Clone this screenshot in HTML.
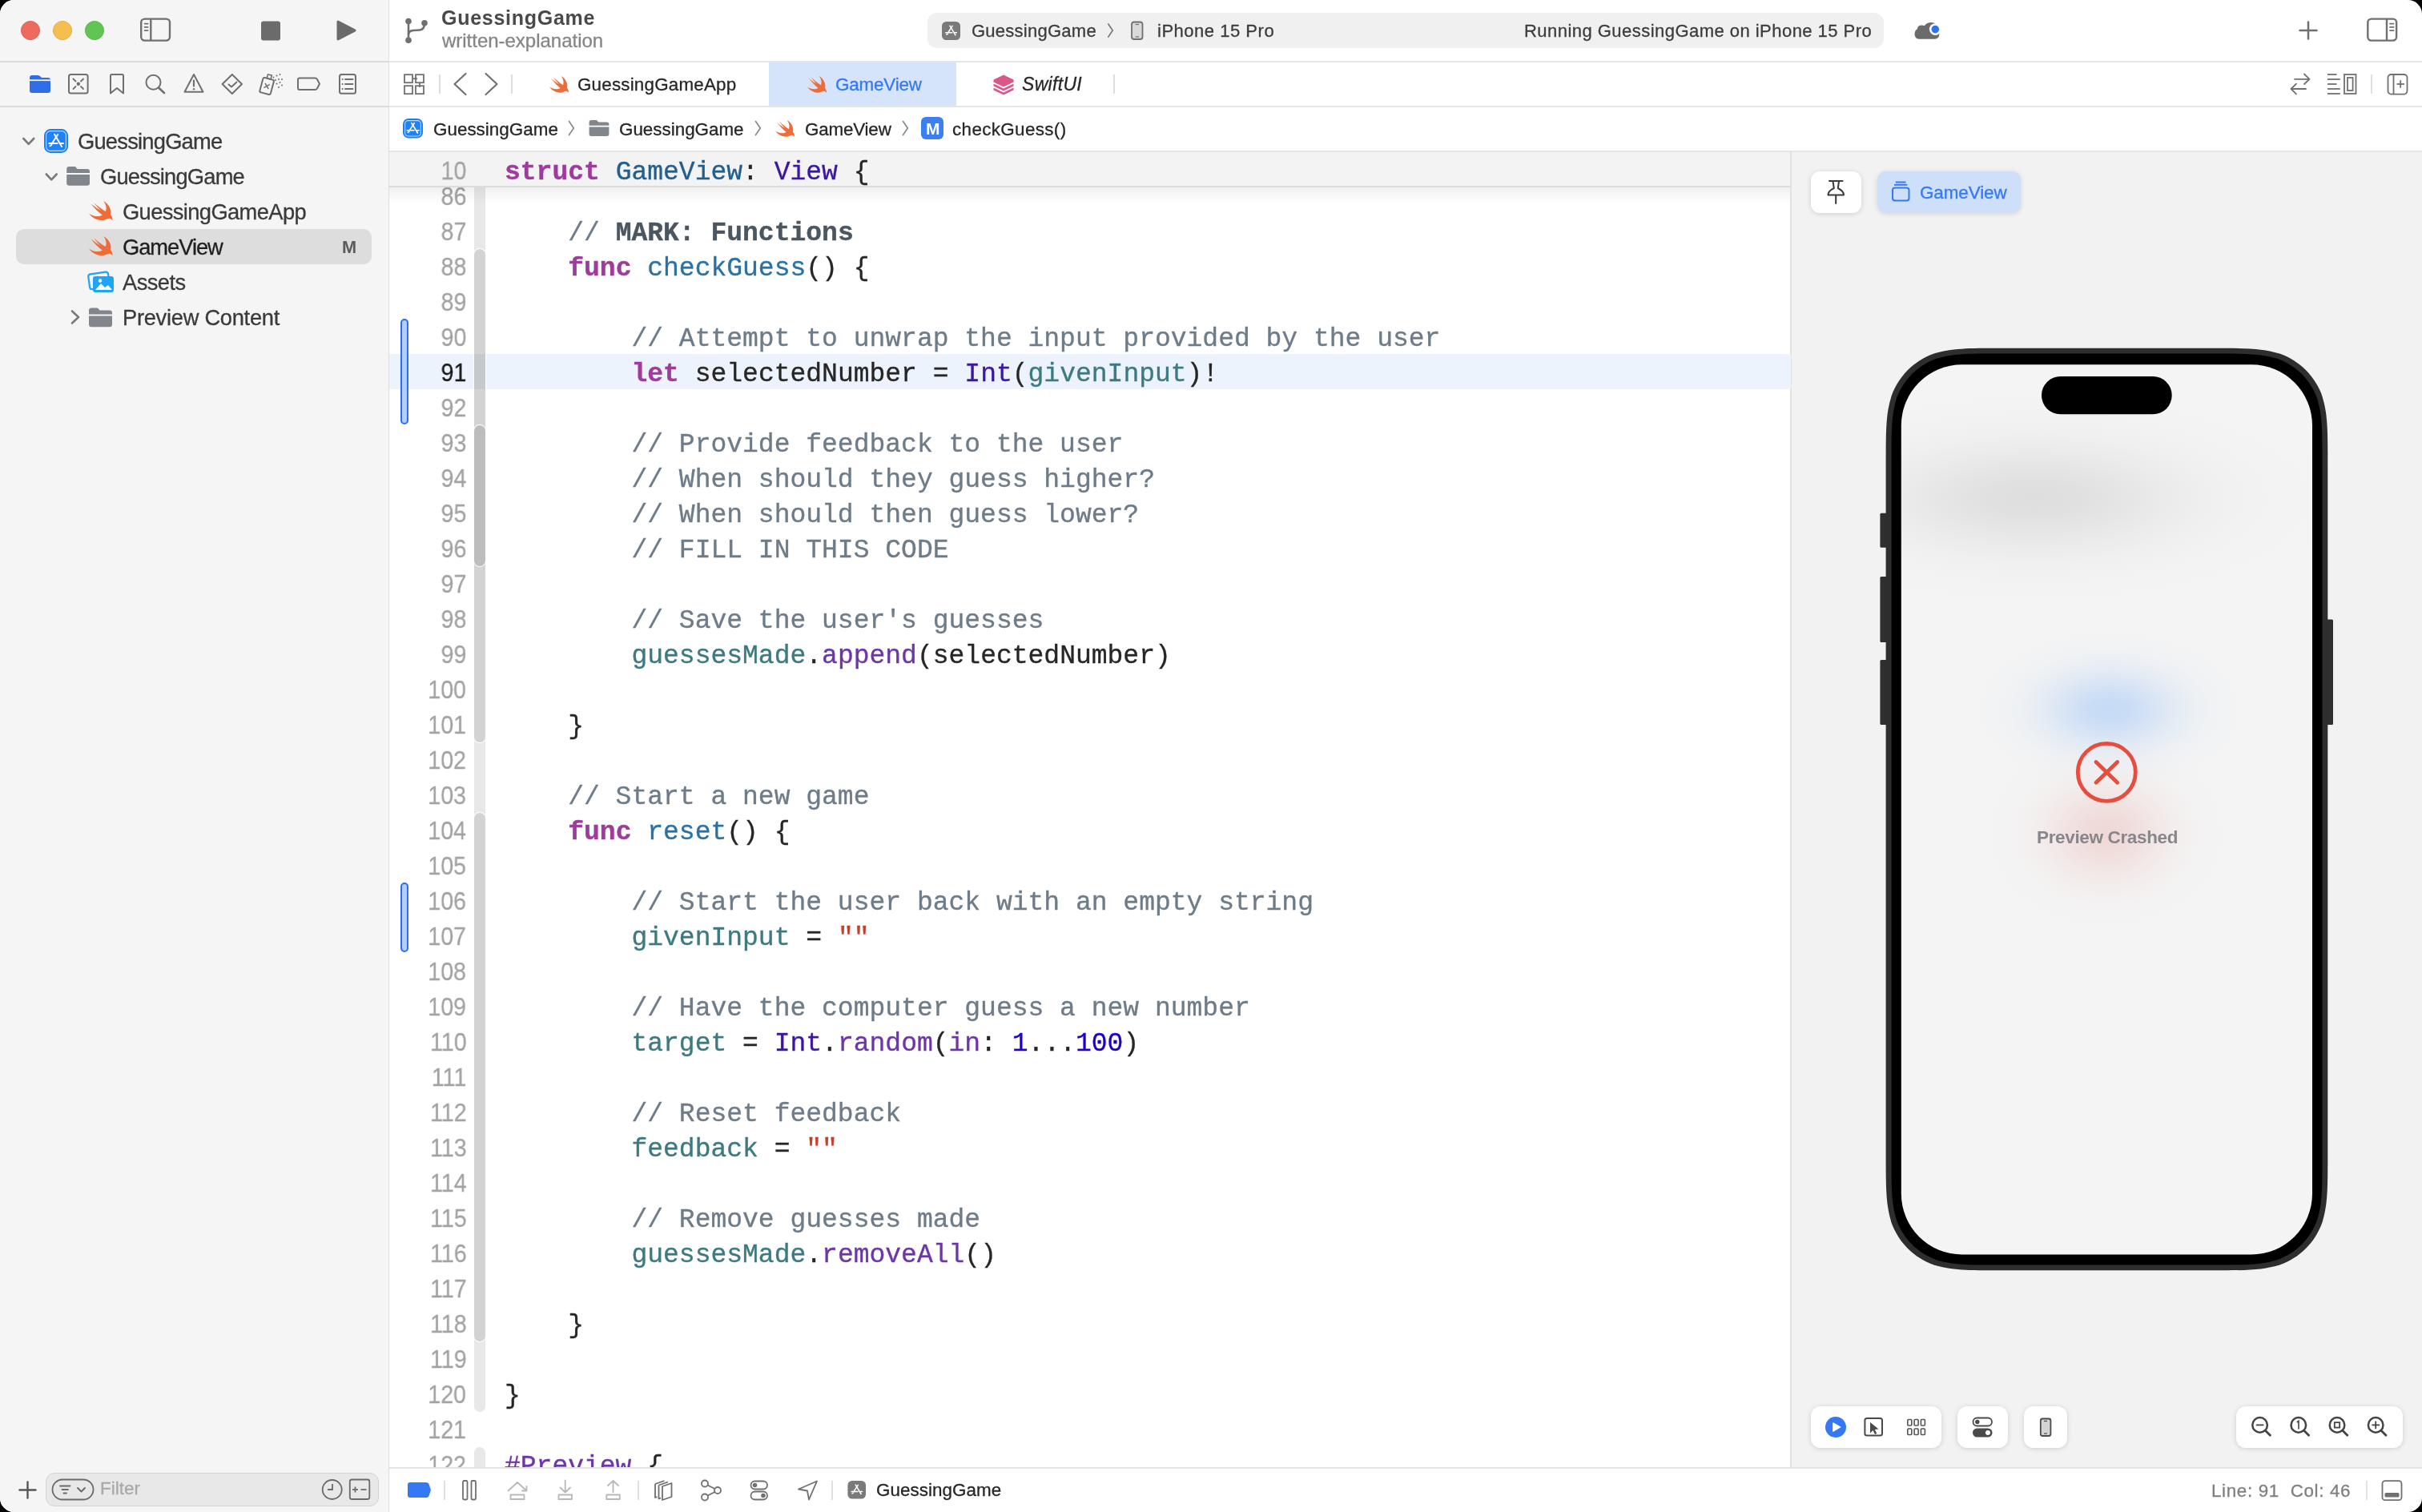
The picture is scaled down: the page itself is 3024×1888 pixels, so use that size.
<!DOCTYPE html><html><head><meta charset="utf-8"><style>
*{margin:0;padding:0;box-sizing:border-box}
html,body{width:3024px;height:1888px;overflow:hidden;background:#000}
body{font-family:'Liberation Sans', sans-serif;position:relative}
#win{position:absolute;left:0;top:0;width:3024px;height:1888px;border-radius:17.5px;overflow:hidden;background:#fff}
.a{position:absolute}
.t{position:absolute;white-space:pre;line-height:1;will-change:transform}
</style></head><body><div id="win"><div class="a" style="left:0px;top:0px;width:485px;height:1888px;background:#f5f5f5;"></div><div class="a" style="left:485px;top:0px;width:1px;height:1888px;background:#dedede;"></div><div class="a" style="left:0px;top:76px;width:485px;height:2px;background:#dbdbdb;"></div><div class="a" style="left:486px;top:76px;width:2538px;height:2px;background:#e5e5e5;"></div><div class="a" style="left:0px;top:132px;width:485px;height:2px;background:#dbdbdb;"></div><div class="a" style="left:486px;top:132px;width:2538px;height:2px;background:#e5e5e5;"></div><div class="a" style="left:486px;top:188px;width:2538px;height:2px;background:#e5e5e5;"></div><div class="a" style="left:2237px;top:190px;width:787px;height:1642px;background:#f2f2f2;"></div><div class="a" style="left:2235px;top:190px;width:2px;height:1642px;background:#e2e2e2;"></div><div class="a" style="left:486px;top:1832px;width:2538px;height:2px;background:#e3e3e3;"></div><div class="a" style="left:1158px;top:16px;width:1194px;height:44px;background:#f0f0f0;border-radius:12px"></div><div class="a" style="left:20px;top:286px;width:444px;height:43.5px;background:#dddddd;border-radius:10px"></div><div class="a" style="left:57px;top:1839px;width:416px;height:42px;background:#e8e8e8;border-radius:11px;border:1px solid #d3d3d3"></div><div class="a" style="left:548px;top:93px;width:2px;height:24px;background:#dedede;"></div><div class="a" style="left:638px;top:93px;width:2px;height:24px;background:#dedede;"></div><div class="a" style="left:960px;top:78px;width:234px;height:54px;background:#d5e4fa;"></div><div class="a" style="left:1390px;top:93px;width:2px;height:24px;background:#dedede;"></div><div class="a" style="left:2960px;top:93px;width:2px;height:24px;background:#e0e0e0;"></div><div class="a" style="left:1150px;top:146px;width:28px;height:28px;background:#3b7ff0;border-radius:6px"></div><div class="a" style="left:486px;top:442px;width:1750px;height:44px;background:#edf3fd;"></div><div class="a" style="left:592px;top:233px;width:14px;height:1530px;background:#e8e8e8;border-radius:0 0 7px 7px"></div><div class="a" style="left:592px;top:1807px;width:14px;height:25px;background:#e8e8e8;border-radius:7px 7px 0 0"></div><div class="a" style="left:592px;top:311px;width:14px;height:616px;background:#d3d3d3;border-radius:7px;box-shadow:0 0 0 1.2px rgba(255,255,255,0.85)"></div><div class="a" style="left:592px;top:1015px;width:14px;height:660px;background:#d3d3d3;border-radius:7px;box-shadow:0 0 0 1.2px rgba(255,255,255,0.85)"></div><div class="a" style="left:592px;top:531px;width:14px;height:176px;background:#bdbdbd;border-radius:7px;box-shadow:0 0 0 1.2px rgba(255,255,255,0.85)"></div><div class="a" style="left:592px;top:442px;width:14px;height:44px;background:rgba(40,80,140,0.08);"></div><div class="a" style="left:500px;top:398px;width:10px;height:132px;background:#b4cefb;border:2px solid #2d6cf5;border-radius:5px"></div><div class="a" style="left:500px;top:1102px;width:10px;height:87px;background:#b4cefb;border:2px solid #2d6cf5;border-radius:5px"></div><div class="a" style="left:0;top:0;width:3024px;height:1888px;clip-path:inset(190px 788px 56px 486px)"><div class="t" style="right:2441.5px;top:229.88px;font-size:31.8px;color:#a3a3a3;font-weight:400;font-family:'Liberation Sans', sans-serif;-webkit-text-stroke:0.3px currentColor;transform:scaleX(0.9);transform-origin:100% 50%">86</div><div class="t" style="left:630px;top:274.72px;font-size:33px;font-family:'Liberation Mono', monospace;-webkit-text-stroke:0.35px currentColor"><span style="color:#262626;">    </span><span style="color:#6e7b88;">// </span><span style="color:#4b5661;font-weight:700;">MARK: Functions</span></div><div class="t" style="right:2441.5px;top:273.88px;font-size:31.8px;color:#a3a3a3;font-weight:400;font-family:'Liberation Sans', sans-serif;-webkit-text-stroke:0.3px currentColor;transform:scaleX(0.9);transform-origin:100% 50%">87</div><div class="t" style="left:630px;top:318.72px;font-size:33px;font-family:'Liberation Mono', monospace;-webkit-text-stroke:0.35px currentColor"><span style="color:#262626;">    </span><span style="color:#9f3a9e;font-weight:700;">func</span><span style="color:#262626;"> </span><span style="color:#2a71a4;">checkGuess</span><span style="color:#262626;">() {</span></div><div class="t" style="right:2441.5px;top:317.88px;font-size:31.8px;color:#a3a3a3;font-weight:400;font-family:'Liberation Sans', sans-serif;-webkit-text-stroke:0.3px currentColor;transform:scaleX(0.9);transform-origin:100% 50%">88</div><div class="t" style="right:2441.5px;top:361.88px;font-size:31.8px;color:#a3a3a3;font-weight:400;font-family:'Liberation Sans', sans-serif;-webkit-text-stroke:0.3px currentColor;transform:scaleX(0.9);transform-origin:100% 50%">89</div><div class="t" style="left:630px;top:406.72px;font-size:33px;font-family:'Liberation Mono', monospace;-webkit-text-stroke:0.35px currentColor"><span style="color:#6e7b88;">        // Attempt to unwrap the input provided by the user</span></div><div class="t" style="right:2441.5px;top:405.88px;font-size:31.8px;color:#a3a3a3;font-weight:400;font-family:'Liberation Sans', sans-serif;-webkit-text-stroke:0.3px currentColor;transform:scaleX(0.9);transform-origin:100% 50%">90</div><div class="t" style="left:630px;top:450.72px;font-size:33px;font-family:'Liberation Mono', monospace;-webkit-text-stroke:0.35px currentColor"><span style="color:#262626;">        </span><span style="color:#9f3a9e;font-weight:700;">let</span><span style="color:#262626;"> selectedNumber = </span><span style="color:#3b16a2;">Int</span><span style="color:#262626;">(</span><span style="color:#3d7a80;">givenInput</span><span style="color:#262626;">)!</span></div><div class="t" style="right:2441.5px;top:449.88px;font-size:31.8px;color:#1a1a1a;font-weight:400;font-family:'Liberation Sans', sans-serif;-webkit-text-stroke:0.3px currentColor;transform:scaleX(0.9);transform-origin:100% 50%">91</div><div class="t" style="right:2441.5px;top:493.88px;font-size:31.8px;color:#a3a3a3;font-weight:400;font-family:'Liberation Sans', sans-serif;-webkit-text-stroke:0.3px currentColor;transform:scaleX(0.9);transform-origin:100% 50%">92</div><div class="t" style="left:630px;top:538.72px;font-size:33px;font-family:'Liberation Mono', monospace;-webkit-text-stroke:0.35px currentColor"><span style="color:#6e7b88;">        // Provide feedback to the user</span></div><div class="t" style="right:2441.5px;top:537.88px;font-size:31.8px;color:#a3a3a3;font-weight:400;font-family:'Liberation Sans', sans-serif;-webkit-text-stroke:0.3px currentColor;transform:scaleX(0.9);transform-origin:100% 50%">93</div><div class="t" style="left:630px;top:582.72px;font-size:33px;font-family:'Liberation Mono', monospace;-webkit-text-stroke:0.35px currentColor"><span style="color:#6e7b88;">        // When should they guess higher?</span></div><div class="t" style="right:2441.5px;top:581.88px;font-size:31.8px;color:#a3a3a3;font-weight:400;font-family:'Liberation Sans', sans-serif;-webkit-text-stroke:0.3px currentColor;transform:scaleX(0.9);transform-origin:100% 50%">94</div><div class="t" style="left:630px;top:626.72px;font-size:33px;font-family:'Liberation Mono', monospace;-webkit-text-stroke:0.35px currentColor"><span style="color:#6e7b88;">        // When should then guess lower?</span></div><div class="t" style="right:2441.5px;top:625.88px;font-size:31.8px;color:#a3a3a3;font-weight:400;font-family:'Liberation Sans', sans-serif;-webkit-text-stroke:0.3px currentColor;transform:scaleX(0.9);transform-origin:100% 50%">95</div><div class="t" style="left:630px;top:670.72px;font-size:33px;font-family:'Liberation Mono', monospace;-webkit-text-stroke:0.35px currentColor"><span style="color:#6e7b88;">        // FILL IN THIS CODE</span></div><div class="t" style="right:2441.5px;top:669.88px;font-size:31.8px;color:#a3a3a3;font-weight:400;font-family:'Liberation Sans', sans-serif;-webkit-text-stroke:0.3px currentColor;transform:scaleX(0.9);transform-origin:100% 50%">96</div><div class="t" style="right:2441.5px;top:713.88px;font-size:31.8px;color:#a3a3a3;font-weight:400;font-family:'Liberation Sans', sans-serif;-webkit-text-stroke:0.3px currentColor;transform:scaleX(0.9);transform-origin:100% 50%">97</div><div class="t" style="left:630px;top:758.72px;font-size:33px;font-family:'Liberation Mono', monospace;-webkit-text-stroke:0.35px currentColor"><span style="color:#6e7b88;">        // Save the user's guesses</span></div><div class="t" style="right:2441.5px;top:757.88px;font-size:31.8px;color:#a3a3a3;font-weight:400;font-family:'Liberation Sans', sans-serif;-webkit-text-stroke:0.3px currentColor;transform:scaleX(0.9);transform-origin:100% 50%">98</div><div class="t" style="left:630px;top:802.72px;font-size:33px;font-family:'Liberation Mono', monospace;-webkit-text-stroke:0.35px currentColor"><span style="color:#262626;">        </span><span style="color:#3d7a80;">guessesMade</span><span style="color:#262626;">.</span><span style="color:#6c36a9;">append</span><span style="color:#262626;">(selectedNumber)</span></div><div class="t" style="right:2441.5px;top:801.88px;font-size:31.8px;color:#a3a3a3;font-weight:400;font-family:'Liberation Sans', sans-serif;-webkit-text-stroke:0.3px currentColor;transform:scaleX(0.9);transform-origin:100% 50%">99</div><div class="t" style="right:2441.5px;top:845.88px;font-size:31.8px;color:#a3a3a3;font-weight:400;font-family:'Liberation Sans', sans-serif;-webkit-text-stroke:0.3px currentColor;transform:scaleX(0.9);transform-origin:100% 50%">100</div><div class="t" style="left:630px;top:890.72px;font-size:33px;font-family:'Liberation Mono', monospace;-webkit-text-stroke:0.35px currentColor"><span style="color:#262626;">    }</span></div><div class="t" style="right:2441.5px;top:889.88px;font-size:31.8px;color:#a3a3a3;font-weight:400;font-family:'Liberation Sans', sans-serif;-webkit-text-stroke:0.3px currentColor;transform:scaleX(0.9);transform-origin:100% 50%">101</div><div class="t" style="right:2441.5px;top:933.88px;font-size:31.8px;color:#a3a3a3;font-weight:400;font-family:'Liberation Sans', sans-serif;-webkit-text-stroke:0.3px currentColor;transform:scaleX(0.9);transform-origin:100% 50%">102</div><div class="t" style="left:630px;top:978.72px;font-size:33px;font-family:'Liberation Mono', monospace;-webkit-text-stroke:0.35px currentColor"><span style="color:#6e7b88;">    // Start a new game</span></div><div class="t" style="right:2441.5px;top:977.88px;font-size:31.8px;color:#a3a3a3;font-weight:400;font-family:'Liberation Sans', sans-serif;-webkit-text-stroke:0.3px currentColor;transform:scaleX(0.9);transform-origin:100% 50%">103</div><div class="t" style="left:630px;top:1022.72px;font-size:33px;font-family:'Liberation Mono', monospace;-webkit-text-stroke:0.35px currentColor"><span style="color:#262626;">    </span><span style="color:#9f3a9e;font-weight:700;">func</span><span style="color:#262626;"> </span><span style="color:#2a71a4;">reset</span><span style="color:#262626;">() {</span></div><div class="t" style="right:2441.5px;top:1021.88px;font-size:31.8px;color:#a3a3a3;font-weight:400;font-family:'Liberation Sans', sans-serif;-webkit-text-stroke:0.3px currentColor;transform:scaleX(0.9);transform-origin:100% 50%">104</div><div class="t" style="right:2441.5px;top:1065.88px;font-size:31.8px;color:#a3a3a3;font-weight:400;font-family:'Liberation Sans', sans-serif;-webkit-text-stroke:0.3px currentColor;transform:scaleX(0.9);transform-origin:100% 50%">105</div><div class="t" style="left:630px;top:1110.72px;font-size:33px;font-family:'Liberation Mono', monospace;-webkit-text-stroke:0.35px currentColor"><span style="color:#6e7b88;">        // Start the user back with an empty string</span></div><div class="t" style="right:2441.5px;top:1109.88px;font-size:31.8px;color:#a3a3a3;font-weight:400;font-family:'Liberation Sans', sans-serif;-webkit-text-stroke:0.3px currentColor;transform:scaleX(0.9);transform-origin:100% 50%">106</div><div class="t" style="left:630px;top:1154.72px;font-size:33px;font-family:'Liberation Mono', monospace;-webkit-text-stroke:0.35px currentColor"><span style="color:#262626;">        </span><span style="color:#3d7a80;">givenInput</span><span style="color:#262626;"> = </span><span style="color:#c2412d;">""</span></div><div class="t" style="right:2441.5px;top:1153.88px;font-size:31.8px;color:#a3a3a3;font-weight:400;font-family:'Liberation Sans', sans-serif;-webkit-text-stroke:0.3px currentColor;transform:scaleX(0.9);transform-origin:100% 50%">107</div><div class="t" style="right:2441.5px;top:1197.88px;font-size:31.8px;color:#a3a3a3;font-weight:400;font-family:'Liberation Sans', sans-serif;-webkit-text-stroke:0.3px currentColor;transform:scaleX(0.9);transform-origin:100% 50%">108</div><div class="t" style="left:630px;top:1242.72px;font-size:33px;font-family:'Liberation Mono', monospace;-webkit-text-stroke:0.35px currentColor"><span style="color:#6e7b88;">        // Have the computer guess a new number</span></div><div class="t" style="right:2441.5px;top:1241.88px;font-size:31.8px;color:#a3a3a3;font-weight:400;font-family:'Liberation Sans', sans-serif;-webkit-text-stroke:0.3px currentColor;transform:scaleX(0.9);transform-origin:100% 50%">109</div><div class="t" style="left:630px;top:1286.72px;font-size:33px;font-family:'Liberation Mono', monospace;-webkit-text-stroke:0.35px currentColor"><span style="color:#262626;">        </span><span style="color:#3d7a80;">target</span><span style="color:#262626;"> = </span><span style="color:#3b16a2;">Int</span><span style="color:#262626;">.</span><span style="color:#6c36a9;">random</span><span style="color:#262626;">(</span><span style="color:#6c36a9;">in</span><span style="color:#262626;">: </span><span style="color:#1c00cf;">1</span><span style="color:#262626;">...</span><span style="color:#1c00cf;">100</span><span style="color:#262626;">)</span></div><div class="t" style="right:2441.5px;top:1285.88px;font-size:31.8px;color:#a3a3a3;font-weight:400;font-family:'Liberation Sans', sans-serif;-webkit-text-stroke:0.3px currentColor;transform:scaleX(0.9);transform-origin:100% 50%">110</div><div class="t" style="right:2441.5px;top:1329.88px;font-size:31.8px;color:#a3a3a3;font-weight:400;font-family:'Liberation Sans', sans-serif;-webkit-text-stroke:0.3px currentColor;transform:scaleX(0.9);transform-origin:100% 50%">111</div><div class="t" style="left:630px;top:1374.72px;font-size:33px;font-family:'Liberation Mono', monospace;-webkit-text-stroke:0.35px currentColor"><span style="color:#6e7b88;">        // Reset feedback</span></div><div class="t" style="right:2441.5px;top:1373.88px;font-size:31.8px;color:#a3a3a3;font-weight:400;font-family:'Liberation Sans', sans-serif;-webkit-text-stroke:0.3px currentColor;transform:scaleX(0.9);transform-origin:100% 50%">112</div><div class="t" style="left:630px;top:1418.72px;font-size:33px;font-family:'Liberation Mono', monospace;-webkit-text-stroke:0.35px currentColor"><span style="color:#262626;">        </span><span style="color:#3d7a80;">feedback</span><span style="color:#262626;"> = </span><span style="color:#c2412d;">""</span></div><div class="t" style="right:2441.5px;top:1417.88px;font-size:31.8px;color:#a3a3a3;font-weight:400;font-family:'Liberation Sans', sans-serif;-webkit-text-stroke:0.3px currentColor;transform:scaleX(0.9);transform-origin:100% 50%">113</div><div class="t" style="right:2441.5px;top:1461.88px;font-size:31.8px;color:#a3a3a3;font-weight:400;font-family:'Liberation Sans', sans-serif;-webkit-text-stroke:0.3px currentColor;transform:scaleX(0.9);transform-origin:100% 50%">114</div><div class="t" style="left:630px;top:1506.72px;font-size:33px;font-family:'Liberation Mono', monospace;-webkit-text-stroke:0.35px currentColor"><span style="color:#6e7b88;">        // Remove guesses made</span></div><div class="t" style="right:2441.5px;top:1505.88px;font-size:31.8px;color:#a3a3a3;font-weight:400;font-family:'Liberation Sans', sans-serif;-webkit-text-stroke:0.3px currentColor;transform:scaleX(0.9);transform-origin:100% 50%">115</div><div class="t" style="left:630px;top:1550.72px;font-size:33px;font-family:'Liberation Mono', monospace;-webkit-text-stroke:0.35px currentColor"><span style="color:#262626;">        </span><span style="color:#3d7a80;">guessesMade</span><span style="color:#262626;">.</span><span style="color:#6c36a9;">removeAll</span><span style="color:#262626;">()</span></div><div class="t" style="right:2441.5px;top:1549.88px;font-size:31.8px;color:#a3a3a3;font-weight:400;font-family:'Liberation Sans', sans-serif;-webkit-text-stroke:0.3px currentColor;transform:scaleX(0.9);transform-origin:100% 50%">116</div><div class="t" style="right:2441.5px;top:1593.88px;font-size:31.8px;color:#a3a3a3;font-weight:400;font-family:'Liberation Sans', sans-serif;-webkit-text-stroke:0.3px currentColor;transform:scaleX(0.9);transform-origin:100% 50%">117</div><div class="t" style="left:630px;top:1638.72px;font-size:33px;font-family:'Liberation Mono', monospace;-webkit-text-stroke:0.35px currentColor"><span style="color:#262626;">    }</span></div><div class="t" style="right:2441.5px;top:1637.88px;font-size:31.8px;color:#a3a3a3;font-weight:400;font-family:'Liberation Sans', sans-serif;-webkit-text-stroke:0.3px currentColor;transform:scaleX(0.9);transform-origin:100% 50%">118</div><div class="t" style="right:2441.5px;top:1681.88px;font-size:31.8px;color:#a3a3a3;font-weight:400;font-family:'Liberation Sans', sans-serif;-webkit-text-stroke:0.3px currentColor;transform:scaleX(0.9);transform-origin:100% 50%">119</div><div class="t" style="left:630px;top:1726.72px;font-size:33px;font-family:'Liberation Mono', monospace;-webkit-text-stroke:0.35px currentColor"><span style="color:#262626;">}</span></div><div class="t" style="right:2441.5px;top:1725.88px;font-size:31.8px;color:#a3a3a3;font-weight:400;font-family:'Liberation Sans', sans-serif;-webkit-text-stroke:0.3px currentColor;transform:scaleX(0.9);transform-origin:100% 50%">120</div><div class="t" style="right:2441.5px;top:1769.88px;font-size:31.8px;color:#a3a3a3;font-weight:400;font-family:'Liberation Sans', sans-serif;-webkit-text-stroke:0.3px currentColor;transform:scaleX(0.9);transform-origin:100% 50%">121</div><div class="t" style="left:630px;top:1814.72px;font-size:33px;font-family:'Liberation Mono', monospace;-webkit-text-stroke:0.35px currentColor"><span style="color:#6c36a9;">#Preview</span><span style="color:#262626;"> {</span></div><div class="t" style="right:2441.5px;top:1813.88px;font-size:31.8px;color:#a3a3a3;font-weight:400;font-family:'Liberation Sans', sans-serif;-webkit-text-stroke:0.3px currentColor;transform:scaleX(0.9);transform-origin:100% 50%">122</div></div><div class="a" style="left:486px;top:190px;width:1749px;height:42px;background:#f3f3f3;"></div><div class="a" style="left:486px;top:232px;width:1749px;height:2px;background:#dcdcdc;"></div><div class="a" style="left:486px;top:234px;width:1749px;height:20px;background:linear-gradient(rgba(0,0,0,0.06),rgba(0,0,0,0))"></div><div class="t" style="left:630px;top:198.72px;font-size:33px;font-family:'Liberation Mono', monospace;-webkit-text-stroke:0.35px currentColor"><span style="color:#9f3a9e;font-weight:700;">struct</span><span style="color:#262626;"> </span><span style="color:#215f8c;">GameView</span><span style="color:#262626;">: </span><span style="color:#3b16a2;">View</span><span style="color:#262626;"> {</span></div><div class="t" style="right:2441.5px;top:197.88px;font-size:31.8px;color:#a3a3a3;font-weight:400;font-family:'Liberation Sans', sans-serif;-webkit-text-stroke:0.3px currentColor;transform:scaleX(0.9);transform-origin:100% 50%">10</div><div class="a" style="left:2261px;top:214px;width:63px;height:52px;background:#ffffff;border-radius:11px;box-shadow:0 1px 6px rgba(0,0,0,0.15)"></div><div class="a" style="left:2344px;top:214px;width:179px;height:52px;background:#cddff9;border-radius:11px;box-shadow:0 1px 6px rgba(0,0,0,0.13)"></div><div class="a" style="left:2261px;top:1756px;width:163px;height:52px;background:#fff;border-radius:12px;box-shadow:0 1px 6px rgba(0,0,0,0.15)"></div><div class="a" style="left:2444px;top:1756px;width:63px;height:52px;background:#fff;border-radius:12px;box-shadow:0 1px 6px rgba(0,0,0,0.15)"></div><div class="a" style="left:2527px;top:1756px;width:54px;height:52px;background:#fff;border-radius:12px;box-shadow:0 1px 6px rgba(0,0,0,0.15)"></div><div class="a" style="left:2792px;top:1756px;width:208px;height:52px;background:#fff;border-radius:12px;box-shadow:0 1px 6px rgba(0,0,0,0.15)"></div><div class="a" style="left:554px;top:1849px;width:2px;height:24px;background:#e0e0e0;"></div><div class="a" style="left:796px;top:1849px;width:2px;height:24px;background:#e0e0e0;"></div><div class="a" style="left:1038px;top:1849px;width:2px;height:24px;background:#e0e0e0;"></div><div class="a" style="left:2954px;top:1849px;width:2px;height:24px;background:#e3e3e3;"></div><svg class="a" style="left:0;top:0" width="3024" height="1888" viewBox="0 0 3024 1888"><defs><linearGradient id="swg" x1="0" y1="0" x2="0" y2="1"><stop offset="0" stop-color="#f4905c"/><stop offset="1" stop-color="#ec6a3e"/></linearGradient><filter id="blur40" filterUnits="userSpaceOnUse" x="2200" y="300" width="800" height="1400"><feGaussianBlur stdDeviation="40"/></filter><filter id="blur25" filterUnits="userSpaceOnUse" x="2200" y="300" width="800" height="1400"><feGaussianBlur stdDeviation="25"/></filter><filter id="sh" x="-0.5" y="-0.5" width="2" height="2"><feDropShadow dx="0" dy="1" stdDeviation="1.5" flood-color="#000" flood-opacity="0.18"/></filter></defs><circle cx="38" cy="38" r="11.6" fill="#ee6a5f" stroke="#d9574c" stroke-width="0.8"/><circle cx="78" cy="38" r="11.6" fill="#f5bf4f" stroke="#dba540" stroke-width="0.8"/><circle cx="118" cy="38" r="11.6" fill="#61c554" stroke="#4fae43" stroke-width="0.8"/><rect x="176.2" y="23.6" width="35.8" height="27" rx="4.5" fill="none" stroke="#707070" stroke-width="2.4"/><line x1="188.3" y1="23.6" x2="188.3" y2="50.6" stroke="#707070" stroke-width="2.4"/><g stroke="#707070" stroke-width="1.8" stroke-linecap="round"><line x1="180.6" y1="29.6" x2="184.6" y2="29.6"/><line x1="180.6" y1="33.9" x2="184.6" y2="33.9"/><line x1="180.6" y1="38.1" x2="184.6" y2="38.1"/></g><rect x="326" y="26.5" width="24" height="24" rx="3" fill="#6b6b6b"/><path d="M420.5 27.5 Q420.5 24.5 423.2 25.9 L443.5 36.6 Q445.8 38 443.5 39.4 L423.2 50.1 Q420.5 51.5 420.5 48.5 Z" fill="#6b6b6b"/><g stroke="#707070" stroke-width="2.6" fill="none" stroke-linecap="round"><path d="M510 27 L510 50"/><path d="M510 43 Q510 38.5 516 38 L524 37.5 Q530 37 530 29"/></g><g fill="#707070"><circle cx="510" cy="26.5" r="3.8"/><circle cx="510" cy="50.3" r="3.8"/><circle cx="530" cy="28.8" r="3.8"/></g><rect x="1176" y="27" width="23" height="23" rx="5.52" fill="#7a7a7a"/><g stroke="#fff" stroke-width="1.50" stroke-linecap="round" fill="none"><path d="M1185.96 32.22 L1192.95 43.86"/><path d="M1189.11 32.41 L1184.05 40.23"/><path d="M1181.75 43.22 L1183.24 42.30"/><path d="M1180.76 40.80 L1188.81 40.80"/><path d="M1191.64 40.80 L1194.40 40.80"/></g><path d="M1383.8 30 L1389.2 38 L1383.8 46" stroke="#7a7a7a" stroke-width="1.7" fill="none" stroke-linecap="round" stroke-linejoin="round"/><rect x="1413" y="27.5" width="13.5" height="21.5" rx="3" fill="#d9d9d9" stroke="#707070" stroke-width="1.8"/><line x1="1417.5" y1="30.5" x2="1422" y2="30.5" stroke="#707070" stroke-width="1.2"/><line x1="1417.5" y1="46" x2="1422" y2="46" stroke="#707070" stroke-width="1.2"/><path d="M2397 48.8 Q2390.5 48.8 2390.5 42.5 Q2390.6 38.2 2393.8 36.3 Q2394.2 31.6 2399.5 31.5 Q2401.5 31.6 2402.8 32.2 Q2405.8 28 2411.3 28 Q2418.5 28.3 2420.5 35 Q2421.5 39 2421.3 43 Q2421 48.8 2414.5 48.8 Z" fill="#6b6b6b"/><circle cx="2416.3" cy="36.6" r="7.4" fill="#fff"/><circle cx="2416.3" cy="36.6" r="4.8" fill="#2f72f0"/><g stroke="#707070" stroke-width="2.5" stroke-linecap="round"><line x1="2882" y1="27.5" x2="2882" y2="48.5"/><line x1="2871.5" y1="38" x2="2892.5" y2="38"/></g><rect x="2956.3" y="23.6" width="35.8" height="27" rx="4.5" fill="none" stroke="#707070" stroke-width="2.4"/><line x1="2980" y1="23.6" x2="2980" y2="50.6" stroke="#707070" stroke-width="2.4"/><g stroke="#707070" stroke-width="1.8" stroke-linecap="round"><line x1="2984" y1="29.6" x2="2988.6" y2="29.6"/><line x1="2984" y1="33.9" x2="2988.6" y2="33.9"/><line x1="2984" y1="38.1" x2="2988.6" y2="38.1"/></g><path d="M37 97 Q37 94 40 94 L47 94 Q49 94 50.5 95.5 L52 97 L60 97 Q63 97 63 100 L63 113 Q63 116 60 116 L40 116 Q37 116 37 113 Z" fill="#2f6de9"/><rect x="37" y="99.3" width="26" height="1.8" fill="#f5f5f5"/><rect x="86" y="93" width="23.6" height="23.6" rx="2.5" fill="none" stroke="#707070" stroke-width="2"/><g stroke="#707070" stroke-width="1.8" stroke-linecap="round"><line x1="91.5" y1="98.5" x2="94.5" y2="101.5"/><line x1="104" y1="98.5" x2="101" y2="101.5"/><line x1="91.5" y1="111" x2="94.5" y2="108"/><line x1="104" y1="111" x2="101" y2="108"/></g><circle cx="97.8" cy="104.8" r="2.2" fill="#707070"/><path d="M138 94.5 Q138 93 139.5 93 L152.5 93 Q154 93 154 94.5 L154 116.5 L146 110 L138 116.5 Z" fill="none" stroke="#707070" stroke-width="2" stroke-linejoin="round"/><circle cx="191.5" cy="102.8" r="9" fill="none" stroke="#707070" stroke-width="2"/><line x1="198" y1="109.5" x2="205" y2="116" stroke="#707070" stroke-width="2.6" stroke-linecap="round"/><path d="M242 93 L253.5 114.8 L230.5 114.8 Z" fill="none" stroke="#707070" stroke-width="2" stroke-linejoin="round"/><line x1="242" y1="100.5" x2="242" y2="107.5" stroke="#707070" stroke-width="2.2" stroke-linecap="round"/><circle cx="242" cy="111.3" r="1.2" fill="#707070"/><path d="M289.8 93 L302 105 L289.8 117 L277.6 105 Z" fill="none" stroke="#707070" stroke-width="2" stroke-linejoin="round"/><path d="M285.5 105.5 L289 108.5 L295.5 102.5" fill="none" stroke="#707070" stroke-width="2" stroke-linecap="round" stroke-linejoin="round"/><g transform="rotate(15 333 108)"><rect x="326" y="98" width="14" height="19" rx="2" fill="none" stroke="#707070" stroke-width="2"/><rect x="330.5" y="93" width="5" height="5" fill="none" stroke="#707070" stroke-width="1.6"/><g stroke="#707070" stroke-width="1.5"><line x1="330" y1="104.5" x2="336" y2="110.5"/><line x1="336" y1="104.5" x2="330" y2="110.5"/></g></g><g fill="#707070"><circle cx="341.5" cy="96.5" r="1"/><circle cx="345.5" cy="94.5" r="1"/><circle cx="349.5" cy="93" r="1"/><circle cx="344" cy="100" r="1"/><circle cx="348" cy="99" r="1"/><circle cx="352" cy="99" r="1"/><circle cx="345.5" cy="104.5" r="1"/><circle cx="349.5" cy="103" r="1"/><circle cx="352" cy="106.5" r="1"/><circle cx="348" cy="109" r="1"/></g><path d="M374 97.5 L393.5 97.5 Q395 97.5 396 99 L399 104.8 L396 110.5 Q395 112 393.5 112 L374 112 Q372 112 372 110 L372 99.5 Q372 97.5 374 97.5 Z" fill="none" stroke="#707070" stroke-width="2" stroke-linejoin="round"/><rect x="424" y="93" width="20" height="23.8" rx="2.5" fill="none" stroke="#707070" stroke-width="2"/><g stroke="#707070" stroke-width="1.8" stroke-linecap="round"><line x1="427.5" y1="99" x2="427.8" y2="99"/><line x1="431" y1="99" x2="440.5" y2="99"/><line x1="427.5" y1="105" x2="427.8" y2="105"/><line x1="431" y1="105" x2="440.5" y2="105"/><line x1="427.5" y1="111" x2="427.8" y2="111"/><line x1="431" y1="111" x2="440.5" y2="111"/></g><path d="M29.3 173 L35.75 179.9 L42.2 173" stroke="#7a7a7a" stroke-width="2.6" fill="none" stroke-linecap="round" stroke-linejoin="round"/><rect x="56" y="162" width="28" height="28" rx="7.199999999999999" fill="#1f82fa" stroke="#1a7ff8" stroke-width="2"/><rect x="57.60" y="163.60" width="24.80" height="24.80" rx="5.20" fill="none" stroke="#c4dcfc" stroke-width="1.1"/><g stroke="#fff" stroke-width="1.95" stroke-linecap="round" fill="none"><path d="M67.99 167.81 L77.11 182.99"/><path d="M72.10 168.05 L65.50 178.25"/><path d="M62.50 182.15 L64.45 180.95"/><path d="M61.21 179.00 L71.71 179.00"/><path d="M75.40 179.00 L79.00 179.00"/></g><path d="M57.8 217.5 L64.25 224.4 L70.7 217.5" stroke="#7a7a7a" stroke-width="2.6" fill="none" stroke-linecap="round" stroke-linejoin="round"/><path d="M83.20 211.20 Q83.20 208.00 86.40 208.00 L93.57 208.00 Q94.72 208.00 95.58 209.90 Q96.30 210.90 97.60 210.90 L108.80 210.90 Q112.00 210.90 112.00 214.10 L112.00 215.90 L83.20 215.90 Z" fill="#80868b"/><path d="M83.20 218.10 L112.00 218.10 L112.00 228.60 Q112.00 231.80 108.80 231.80 L86.40 231.80 Q83.20 231.80 83.20 228.60 Z" fill="#80868b"/><path transform="translate(107.08 245.91) scale(1.6273 1.4933)" d="M13.543 3.41c4.114 2.47 6.545 7.162 5.549 11.131-.024.093-.05.181-.076.272l.002.001c2.062 2.538 1.5 5.258 1.236 4.745-1.072-2.086-3.066-1.568-4.088-1.043a6.803 6.803 0 0 1-.281.158l-.02.012-.002.002c-2.115 1.123-4.957 1.205-7.812-.022a12.568 12.568 0 0 1-5.64-4.838c.649.48 1.35.902 2.097 1.252 3.019 1.414 6.051 1.311 8.197-.002C9.651 12.73 7.101 9.67 5.146 7.191a10.628 10.628 0 0 1-1.005-1.384c2.34 2.142 6.038 4.83 7.365 5.576C8.69 8.408 6.208 4.743 6.324 4.86c4.436 4.47 8.528 6.996 8.528 6.996.154.085.27.154.36.213.085-.215.16-.437.224-.668.708-2.588-.09-5.548-1.893-7.992z" fill="#ef6b37"/><path transform="translate(107.08 289.91) scale(1.6273 1.4933)" d="M13.543 3.41c4.114 2.47 6.545 7.162 5.549 11.131-.024.093-.05.181-.076.272l.002.001c2.062 2.538 1.5 5.258 1.236 4.745-1.072-2.086-3.066-1.568-4.088-1.043a6.803 6.803 0 0 1-.281.158l-.02.012-.002.002c-2.115 1.123-4.957 1.205-7.812-.022a12.568 12.568 0 0 1-5.64-4.838c.649.48 1.35.902 2.097 1.252 3.019 1.414 6.051 1.311 8.197-.002C9.651 12.73 7.101 9.67 5.146 7.191a10.628 10.628 0 0 1-1.005-1.384c2.34 2.142 6.038 4.83 7.365 5.576C8.69 8.408 6.208 4.743 6.324 4.86c4.436 4.47 8.528 6.996 8.528 6.996.154.085.27.154.36.213.085-.215.16-.437.224-.668.708-2.588-.09-5.548-1.893-7.992z" fill="#ef6b37"/><rect x="111" y="341" width="25" height="19" rx="3" fill="none" stroke="#1ea5f7" stroke-width="2.2" transform="rotate(-8 123 350)"/><rect x="116" y="345" width="26" height="20" rx="3" fill="#1ea5f7"/><path d="M119 362 L126 354 L131 359 L135 356 L140 362 Z" fill="#fff"/><circle cx="125" cy="350.5" r="2.2" fill="#fff"/><path d="M90 388.5 L98 396.0 L90 403.5" stroke="#7a7a7a" stroke-width="2.6" fill="none" stroke-linecap="round" stroke-linejoin="round"/><path d="M111.00 387.70 Q111.00 384.50 114.20 384.50 L121.44 384.50 Q122.60 384.50 123.47 386.40 Q124.19 387.40 125.50 387.40 L136.80 387.40 Q140.00 387.40 140.00 390.60 L140.00 392.40 L111.00 392.40 Z" fill="#80868b"/><path d="M111.00 394.60 L140.00 394.60 L140.00 405.10 Q140.00 408.30 136.80 408.30 L114.20 408.30 Q111.00 408.30 111.00 405.10 Z" fill="#80868b"/><g stroke="#555" stroke-width="2.4" stroke-linecap="round"><line x1="34.5" y1="1850.5" x2="34.5" y2="1870.5"/><line x1="24.5" y1="1860.5" x2="44.5" y2="1860.5"/></g><rect x="65.5" y="1847.5" width="51" height="25" rx="12.5" fill="none" stroke="#6b6b6b" stroke-width="1.8"/><g stroke="#6b6b6b" stroke-width="1.8" stroke-linecap="round"><line x1="75" y1="1855.5" x2="87.5" y2="1855.5"/><line x1="77.5" y1="1860" x2="85" y2="1860"/><line x1="79.5" y1="1864.5" x2="83" y2="1864.5"/></g><path d="M97 1858 L101.5 1862.5 L106 1858" fill="none" stroke="#6b6b6b" stroke-width="2" stroke-linecap="round" stroke-linejoin="round"/><circle cx="414.7" cy="1860" r="12" fill="none" stroke="#6b6b6b" stroke-width="1.8"/><path d="M415 1853 L415 1860 L409 1860" fill="none" stroke="#6b6b6b" stroke-width="1.8"/><rect x="436.8" y="1847.5" width="24.5" height="24.5" rx="2.5" fill="none" stroke="#6b6b6b" stroke-width="1.8"/><g stroke="#6b6b6b" stroke-width="1.8"><line x1="440" y1="1860" x2="447" y2="1860"/><line x1="443.5" y1="1856.5" x2="443.5" y2="1863.5"/><line x1="450.5" y1="1860" x2="457.5" y2="1860"/></g><g fill="none" stroke="#707070" stroke-width="1.8"><rect x="505" y="93.2" width="10" height="10"/><rect x="519" y="93.2" width="10" height="10"/><rect x="505" y="107.2" width="10" height="10"/><rect x="519" y="107.2" width="10" height="10"/><line x1="515" y1="98.2" x2="521" y2="98.2"/><line x1="524" y1="103.2" x2="524" y2="109"/></g><path d="M581.5 92 L567.5 105 L581.5 118" fill="none" stroke="#707070" stroke-width="2.2" stroke-linecap="round" stroke-linejoin="round"/><path d="M606.5 92 L620.5 105 L606.5 118" fill="none" stroke="#707070" stroke-width="2.2" stroke-linecap="round" stroke-linejoin="round"/><path transform="translate(682.82 90.62) scale(1.3194 1.2852)" d="M13.543 3.41c4.114 2.47 6.545 7.162 5.549 11.131-.024.093-.05.181-.076.272l.002.001c2.062 2.538 1.5 5.258 1.236 4.745-1.072-2.086-3.066-1.568-4.088-1.043a6.803 6.803 0 0 1-.281.158l-.02.012-.002.002c-2.115 1.123-4.957 1.205-7.812-.022a12.568 12.568 0 0 1-5.64-4.838c.649.48 1.35.902 2.097 1.252 3.019 1.414 6.051 1.311 8.197-.002C9.651 12.73 7.101 9.67 5.146 7.191a10.628 10.628 0 0 1-1.005-1.384c2.34 2.142 6.038 4.83 7.365 5.576C8.69 8.408 6.208 4.743 6.324 4.86c4.436 4.47 8.528 6.996 8.528 6.996.154.085.27.154.36.213.085-.215.16-.437.224-.668.708-2.588-.09-5.548-1.893-7.992z" fill="#ef6b37"/><path transform="translate(1004.82 90.62) scale(1.3194 1.2852)" d="M13.543 3.41c4.114 2.47 6.545 7.162 5.549 11.131-.024.093-.05.181-.076.272l.002.001c2.062 2.538 1.5 5.258 1.236 4.745-1.072-2.086-3.066-1.568-4.088-1.043a6.803 6.803 0 0 1-.281.158l-.02.012-.002.002c-2.115 1.123-4.957 1.205-7.812-.022a12.568 12.568 0 0 1-5.64-4.838c.649.48 1.35.902 2.097 1.252 3.019 1.414 6.051 1.311 8.197-.002C9.651 12.73 7.101 9.67 5.146 7.191a10.628 10.628 0 0 1-1.005-1.384c2.34 2.142 6.038 4.83 7.365 5.576C8.69 8.408 6.208 4.743 6.324 4.86c4.436 4.47 8.528 6.996 8.528 6.996.154.085.27.154.36.213.085-.215.16-.437.224-.668.708-2.588-.09-5.548-1.893-7.992z" fill="#ef6b37"/><g transform="translate(1253 105.5)"><path d="M-12.5 4 L0 10 L12.5 4 L12.5 7 L0 13 L-12.5 7 Z" fill="#d9578b"/><path d="M-12.5 -1 L0 5 L12.5 -1 L12.5 2 L0 8 L-12.5 2 Z" fill="#d9578b"/><path d="M-12.5 -6 L0 -12 L12.5 -6 L12.5 -3 L0 3 L-12.5 -3 Z" fill="#d9578b"/></g><g fill="none" stroke="#707070" stroke-width="1.8" stroke-linecap="round" stroke-linejoin="round"><path d="M2865 98.8 L2883.5 98.8 M2877 92.5 L2883.5 98.8 L2877 105"/><path d="M2879 111 L2860.5 111 M2867 104.7 L2860.5 111 L2867 117.3"/></g><g stroke="#707070" stroke-width="1.8"><line x1="2906" y1="93" x2="2917.5" y2="93"/><line x1="2906" y1="99" x2="2921.8" y2="99"/><line x1="2906" y1="105" x2="2917.5" y2="105"/><line x1="2906" y1="111" x2="2921.8" y2="111"/><line x1="2906" y1="117" x2="2921.8" y2="117"/></g><rect x="2927" y="93" width="14.5" height="24" fill="none" stroke="#707070" stroke-width="1.8"/><rect x="2931" y="97" width="6.6" height="16" fill="none" stroke="#707070" stroke-width="1.8"/><rect x="2981.5" y="93" width="24" height="24.6" rx="4" fill="none" stroke="#707070" stroke-width="1.8"/><line x1="2988.5" y1="93" x2="2988.5" y2="117.6" stroke="#707070" stroke-width="1.8"/><g stroke="#707070" stroke-width="1.8"><line x1="2992.5" y1="105" x2="3002" y2="105"/><line x1="2997.2" y1="100.3" x2="2997.2" y2="109.7"/></g><rect x="504" y="149" width="23" height="22.599999999999994" rx="6.0" fill="#1f82fa" stroke="#1a7ff8" stroke-width="2"/><rect x="505.60" y="150.60" width="19.80" height="19.40" rx="4.00" fill="none" stroke="#c4dcfc" stroke-width="1.1"/><g stroke="#fff" stroke-width="1.62" stroke-linecap="round" fill="none"><path d="M513.83 153.58 L521.42 166.03"/><path d="M517.25 153.78 L511.75 162.14"/><path d="M509.25 165.34 L510.88 164.36"/><path d="M508.18 162.76 L516.92 162.76"/><path d="M520.00 162.76 L523.00 162.76"/></g><path d="M710.5 151.5 L716.3 160 L710.5 168.5" stroke="#8a8a8a" stroke-width="1.7" fill="none" stroke-linecap="round" stroke-linejoin="round"/><path d="M735.60 152.69 Q735.60 150.00 738.29 150.00 L744.53 150.00 Q745.52 150.00 746.26 151.60 Q746.88 152.44 748.00 152.44 L757.71 152.44 Q760.40 152.44 760.40 155.13 L760.40 156.64 L735.60 156.64 Z" fill="#80868b"/><path d="M735.60 158.49 L760.40 158.49 L760.40 167.31 Q760.40 170.00 757.71 170.00 L738.29 170.00 Q735.60 170.00 735.60 167.31 Z" fill="#80868b"/><path d="M943.5 151.5 L949.3 160 L943.5 168.5" stroke="#8a8a8a" stroke-width="1.7" fill="none" stroke-linecap="round" stroke-linejoin="round"/><path transform="translate(964.82 145.62) scale(1.3194 1.2852)" d="M13.543 3.41c4.114 2.47 6.545 7.162 5.549 11.131-.024.093-.05.181-.076.272l.002.001c2.062 2.538 1.5 5.258 1.236 4.745-1.072-2.086-3.066-1.568-4.088-1.043a6.803 6.803 0 0 1-.281.158l-.02.012-.002.002c-2.115 1.123-4.957 1.205-7.812-.022a12.568 12.568 0 0 1-5.64-4.838c.649.48 1.35.902 2.097 1.252 3.019 1.414 6.051 1.311 8.197-.002C9.651 12.73 7.101 9.67 5.146 7.191a10.628 10.628 0 0 1-1.005-1.384c2.34 2.142 6.038 4.83 7.365 5.576C8.69 8.408 6.208 4.743 6.324 4.86c4.436 4.47 8.528 6.996 8.528 6.996.154.085.27.154.36.213.085-.215.16-.437.224-.668.708-2.588-.09-5.548-1.893-7.992z" fill="#ef6b37"/><path d="M1127.5 151.5 L1133.3 160 L1127.5 168.5" stroke="#8a8a8a" stroke-width="1.7" fill="none" stroke-linecap="round" stroke-linejoin="round"/><g fill="none" stroke="#3a3a3a" stroke-width="2" stroke-linecap="round" stroke-linejoin="round"><path d="M2284 226 L2300.5 226 M2288.5 226.5 L2289.8 235 Q2282.5 238.5 2282.5 243.5 L2302 243.5 Q2302 238.5 2294.8 235 L2296 226.5 M2292.2 244 L2292.2 254"/></g><g fill="none" stroke="#3478f6" stroke-width="2"><rect x="2363" y="234.5" width="20.5" height="16" rx="3"/><line x1="2365" y1="230.8" x2="2381.3" y2="230.8"/><line x1="2366.8" y1="227.5" x2="2379.5" y2="227.5"/></g><rect x="2347.4" y="640.8" width="9" height="43" rx="1.5" fill="#2f2f2f"/><rect x="2347.4" y="720" width="9" height="82" rx="1.5" fill="#2f2f2f"/><rect x="2347.4" y="824" width="9" height="81" rx="1.5" fill="#2f2f2f"/><rect x="2904" y="773.4" width="9" height="131.6" rx="1.5" fill="#2f2f2f"/><path d="M2498.29 434.80 L2762.61 434.80 C2803.98 434.80 2824.67 434.80 2846.94 441.84 C2871.25 450.69 2890.41 469.85 2899.26 494.16 C2906.30 516.43 2906.30 537.12 2906.30 578.49 L2906.30 1442.61 C2906.30 1483.98 2906.30 1504.67 2899.26 1526.94 C2890.41 1551.25 2871.25 1570.41 2846.94 1579.26 C2824.67 1586.30 2803.98 1586.30 2762.61 1586.30 L2498.29 1586.30 C2456.92 1586.30 2436.23 1586.30 2413.96 1579.26 C2389.65 1570.41 2370.49 1551.25 2361.64 1526.94 C2354.60 1504.67 2354.60 1483.98 2354.60 1442.61 L2354.60 578.49 C2354.60 537.12 2354.60 516.43 2361.64 494.16 C2370.49 469.85 2389.65 450.69 2413.96 441.84 C2436.23 434.80 2456.92 434.80 2498.29 434.80 Z" fill="#2e2e2e"/><path d="M2496.02 441.50 L2764.98 441.50 C2803.71 441.50 2823.08 441.50 2843.93 448.09 C2866.69 456.38 2884.62 474.31 2892.91 497.07 C2899.50 517.92 2899.50 537.29 2899.50 576.02 L2899.50 1444.98 C2899.50 1483.71 2899.50 1503.08 2892.91 1523.93 C2884.62 1546.69 2866.69 1564.62 2843.93 1572.91 C2823.08 1579.50 2803.71 1579.50 2764.98 1579.50 L2496.02 1579.50 C2457.29 1579.50 2437.92 1579.50 2417.07 1572.91 C2394.31 1564.62 2376.38 1546.69 2368.09 1523.93 C2361.50 1503.08 2361.50 1483.71 2361.50 1444.98 L2361.50 576.02 C2361.50 537.29 2361.50 517.92 2368.09 497.07 C2376.38 474.31 2394.31 456.38 2417.07 448.09 C2437.92 441.50 2457.29 441.50 2496.02 441.50 Z" fill="#000"/><rect x="2373.8" y="455.3" width="513.2" height="1111.2" rx="76" fill="#f4f4f4"/><defs><radialGradient id="gb" cx="0.5" cy="0.5" r="0.5"><stop offset="0.00" stop-color="#c8c8c8" stop-opacity="0.500"/><stop offset="0.15" stop-color="#c8c8c8" stop-opacity="0.452"/><stop offset="0.30" stop-color="#c8c8c8" stop-opacity="0.333"/><stop offset="0.45" stop-color="#c8c8c8" stop-opacity="0.201"/><stop offset="0.60" stop-color="#c8c8c8" stop-opacity="0.099"/><stop offset="0.75" stop-color="#c8c8c8" stop-opacity="0.040"/><stop offset="0.90" stop-color="#c8c8c8" stop-opacity="0.013"/><stop offset="1.00" stop-color="#c8c8c8" stop-opacity="0.006"/></radialGradient><radialGradient id="bb" cx="0.5" cy="0.5" r="0.5"><stop offset="0.00" stop-color="#b6d2f6" stop-opacity="0.750"/><stop offset="0.15" stop-color="#b6d2f6" stop-opacity="0.678"/><stop offset="0.30" stop-color="#b6d2f6" stop-opacity="0.500"/><stop offset="0.45" stop-color="#b6d2f6" stop-opacity="0.302"/><stop offset="0.60" stop-color="#b6d2f6" stop-opacity="0.148"/><stop offset="0.75" stop-color="#b6d2f6" stop-opacity="0.060"/><stop offset="0.90" stop-color="#b6d2f6" stop-opacity="0.020"/><stop offset="1.00" stop-color="#b6d2f6" stop-opacity="0.008"/></radialGradient><radialGradient id="pb" cx="0.5" cy="0.5" r="0.5"><stop offset="0.00" stop-color="#ecc6c2" stop-opacity="0.600"/><stop offset="0.15" stop-color="#ecc6c2" stop-opacity="0.542"/><stop offset="0.30" stop-color="#ecc6c2" stop-opacity="0.400"/><stop offset="0.45" stop-color="#ecc6c2" stop-opacity="0.241"/><stop offset="0.60" stop-color="#ecc6c2" stop-opacity="0.119"/><stop offset="0.75" stop-color="#ecc6c2" stop-opacity="0.048"/><stop offset="0.90" stop-color="#ecc6c2" stop-opacity="0.016"/><stop offset="1.00" stop-color="#ecc6c2" stop-opacity="0.007"/></radialGradient></defs><g clip-path="url(#scr)"><ellipse cx="2540" cy="622" rx="370" ry="135" fill="url(#gb)"/><ellipse cx="2634" cy="886" rx="170" ry="100" fill="url(#bb)"/><ellipse cx="2630" cy="1040" rx="150" ry="120" fill="url(#pb)"/></g><defs><clipPath id="scr"><rect x="2373.8" y="455.3" width="513.2" height="1111.2" rx="76"/></clipPath></defs><rect x="2549" y="470" width="162.7" height="47.3" rx="23.6" fill="#000"/><circle cx="2630.3" cy="964.3" r="36" fill="none" stroke="#e84c3d" stroke-width="4.8"/><g stroke="#e84c3d" stroke-width="4.8" stroke-linecap="round"><line x1="2617" y1="951.5" x2="2643.7" y2="977.2"/><line x1="2643.7" y1="951.5" x2="2617" y2="977.2"/></g><circle cx="2292" cy="1782" r="13" fill="#3478f6"/><path d="M2288.8 1776.8 L2297.8 1782 L2288.8 1787.2 Z" fill="#fff" stroke="#fff" stroke-width="1.2" stroke-linejoin="round"/><rect x="2328.4" y="1771" width="21.6" height="21.6" rx="2.5" fill="none" stroke="#4a4a4a" stroke-width="2"/><path d="M2335 1776 L2335 1789.5 L2338.5 1786 L2341 1791 L2343.3 1790 L2340.8 1785 L2345.5 1784.5 Z" fill="#4a4a4a"/><g fill="none" stroke="#555" stroke-width="1.6"><rect x="2381.8" y="1772.5" width="5" height="7.5" rx="1"/><rect x="2381.8" y="1784.0" width="5" height="7.5" rx="1"/><rect x="2390.1" y="1772.5" width="5" height="7.5" rx="1"/><rect x="2390.1" y="1784.0" width="5" height="7.5" rx="1"/><rect x="2398.4" y="1772.5" width="5" height="7.5" rx="1"/><rect x="2398.4" y="1784.0" width="5" height="7.5" rx="1"/></g><rect x="2463.5" y="1770.5" width="23.5" height="10" rx="5" fill="none" stroke="#4a4a4a" stroke-width="1.8"/><circle cx="2468.8" cy="1775.5" r="2.7" fill="#4a4a4a"/><rect x="2463" y="1783.5" width="24.5" height="11" rx="5.5" fill="#4a4a4a"/><circle cx="2482" cy="1789" r="3" fill="#fff"/><rect x="2547.8" y="1771.5" width="12.6" height="21.5" rx="2.5" fill="#d4d4d4" stroke="#4a4a4a" stroke-width="1.8"/><line x1="2552" y1="1774.5" x2="2556" y2="1774.5" stroke="#4a4a4a" stroke-width="1.2"/><line x1="2552" y1="1790" x2="2556" y2="1790" stroke="#4a4a4a" stroke-width="1.2"/><g fill="none" stroke="#444" stroke-width="2.5"><circle cx="2821.6" cy="1779.4" r="9.3"/><line x1="2828.4" y1="1786.2" x2="2834.4" y2="1792.2" stroke-width="2.8" stroke-linecap="round"/><line x1="2816.8" y1="1779.4" x2="2826.4" y2="1779.4" stroke-width="1.8"/></g><g fill="none" stroke="#444" stroke-width="2.5"><circle cx="2869.8" cy="1779.4" r="9.3"/><line x1="2876.6000000000004" y1="1786.2" x2="2882.6000000000004" y2="1792.2" stroke-width="2.8" stroke-linecap="round"/><path d="M2867.8 1776 L2870 1774.3 L2870 1784.5" stroke-width="1.6"/></g><g fill="none" stroke="#444" stroke-width="2.5"><circle cx="2918" cy="1779.4" r="9.3"/><line x1="2924.8" y1="1786.2" x2="2930.8" y2="1792.2" stroke-width="2.8" stroke-linecap="round"/><rect x="2914.8" y="1776.2" width="6.4" height="6.4" stroke-width="1.8"/></g><g fill="none" stroke="#444" stroke-width="2.5"><circle cx="2966.2" cy="1779.4" r="9.3"/><line x1="2973.0" y1="1786.2" x2="2979.0" y2="1792.2" stroke-width="2.8" stroke-linecap="round"/><line x1="2961.4" y1="1779.4" x2="2971" y2="1779.4" stroke-width="1.8"/><line x1="2966.2" y1="1774.6" x2="2966.2" y2="1784.2" stroke-width="1.8"/></g><path d="M512 1851 L532 1851 Q534 1851 535.3 1852.5 L538 1860.5 L535.3 1868.5 Q534 1870 532 1870 L512 1870 Q509 1870 509 1867 L509 1854 Q509 1851 512 1851 Z" fill="#3478f6"/><rect x="578" y="1849" width="5.5" height="23.5" rx="1.5" fill="none" stroke="#707070" stroke-width="1.8"/><rect x="588.5" y="1849" width="5.5" height="23.5" rx="1.5" fill="none" stroke="#707070" stroke-width="1.8"/><g fill="none" stroke="#b8b8b8" stroke-width="1.8" stroke-linecap="round" stroke-linejoin="round"><path d="M634.5 1861.5 L646 1851 L657.5 1861.5 M652 1861.5 L657.5 1861.5 L657.5 1856"/><rect x="637.5" y="1866.5" width="17" height="5.5"/></g><g fill="none" stroke="#b8b8b8" stroke-width="1.8" stroke-linecap="round" stroke-linejoin="round"><path d="M705.7 1848.5 L705.7 1863 M699.5 1857.5 L705.7 1863.5 L712 1857.5"/><rect x="697.5" y="1866.5" width="16.5" height="5.5"/></g><g fill="none" stroke="#b8b8b8" stroke-width="1.8" stroke-linecap="round" stroke-linejoin="round"><path d="M765.5 1863 L765.5 1849 M759 1855 L765.5 1849 L772 1855"/><rect x="757.3" y="1866.5" width="16.5" height="5.5"/></g><g fill="none" stroke="#707070" stroke-width="1.8" stroke-linejoin="round"><path d="M827 1856 L838.5 1852 L838.5 1869 L827 1873 Z"/><path d="M822.5 1854.5 L834 1850.5 M822.5 1854.5 L822.5 1871.5 L825 1870.7"/><path d="M818 1853 L829.5 1849 M818 1853 L818 1870 L820.5 1869.2"/></g><g fill="none" stroke="#707070" stroke-width="1.8"><circle cx="880" cy="1852.5" r="4"/><circle cx="880" cy="1869.5" r="4"/><circle cx="896" cy="1861" r="4"/><path d="M883.5 1854.5 L892.5 1859 M883.5 1867.5 L892.5 1863"/></g><g fill="none" stroke="#707070" stroke-width="1.8"><rect x="937.5" y="1849.5" width="20.5" height="10" rx="5"/><rect x="937.5" y="1862.5" width="20.5" height="10" rx="5"/></g><circle cx="942.5" cy="1854.5" r="2.8" fill="#707070"/><circle cx="953" cy="1867.5" r="2.8" fill="#707070"/><path d="M997 1859.5 L1020 1849.5 L1010 1872.5 L1008 1861.5 Z" fill="none" stroke="#707070" stroke-width="1.8" stroke-linejoin="round"/><rect x="1058.4" y="1849" width="22.59999999999991" height="22.5" rx="5.423999999999978" fill="#7a7a7a"/><g stroke="#fff" stroke-width="1.50" stroke-linecap="round" fill="none"><path d="M1068.19 1854.11 L1075.06 1865.49"/><path d="M1071.28 1854.29 L1066.31 1861.94"/><path d="M1064.05 1864.86 L1065.52 1863.96"/><path d="M1063.08 1862.50 L1070.99 1862.50"/><path d="M1073.77 1862.50 L1076.48 1862.50"/></g><rect x="2974.5" y="1849.2" width="24" height="24" rx="3.5" fill="none" stroke="#707070" stroke-width="1.8"/><rect x="2977.5" y="1864" width="18" height="5.5" rx="1.5" fill="#707070"/></svg><div class="t" style="left:551.00px;top:10.44px;font-size:25px;color:#4a4a4a;font-weight:700;font-family:'Liberation Sans', sans-serif;letter-spacing:0.727px;">GuessingGame</div><div class="t" style="left:552.00px;top:39.48px;font-size:24px;color:#858585;font-weight:400;font-family:'Liberation Sans', sans-serif;letter-spacing:-0.017px;-webkit-text-stroke:0.3px currentColor;">written-explanation</div><div class="t" style="left:1213.00px;top:27.58px;font-size:22px;color:#3c3c3c;font-weight:400;font-family:'Liberation Sans', sans-serif;letter-spacing:0.255px;-webkit-text-stroke:0.3px currentColor;">GuessingGame</div><div class="t" style="left:1444.80px;top:27.58px;font-size:22px;color:#3c3c3c;font-weight:400;font-family:'Liberation Sans', sans-serif;letter-spacing:0.517px;-webkit-text-stroke:0.3px currentColor;">iPhone 15 Pro</div><div class="t" style="left:1903.00px;top:27.58px;font-size:22px;color:#3c3c3c;font-weight:400;font-family:'Liberation Sans', sans-serif;letter-spacing:0.464px;-webkit-text-stroke:0.3px currentColor;">Running GuessingGame on iPhone 15 Pro</div><div class="t" style="left:97.00px;top:162.89px;font-size:27.3px;color:#3a3a3a;font-weight:400;font-family:'Liberation Sans', sans-serif;letter-spacing:-0.773px;-webkit-text-stroke:0.3px currentColor;">GuessingGame</div><div class="t" style="left:125.40px;top:206.89px;font-size:27.3px;color:#3a3a3a;font-weight:400;font-family:'Liberation Sans', sans-serif;letter-spacing:-0.809px;-webkit-text-stroke:0.3px currentColor;">GuessingGame</div><div class="t" style="left:153.00px;top:250.89px;font-size:27.3px;color:#3a3a3a;font-weight:400;font-family:'Liberation Sans', sans-serif;letter-spacing:-0.614px;-webkit-text-stroke:0.3px currentColor;">GuessingGameApp</div><div class="t" style="left:153.00px;top:294.89px;font-size:27.3px;color:#1e1e1e;font-weight:400;font-family:'Liberation Sans', sans-serif;letter-spacing:-1.029px;-webkit-text-stroke:0.3px currentColor;">GameView</div><div class="t" style="left:426.70px;top:297.55px;font-size:21.8px;color:#5c5c5c;font-weight:700;font-family:'Liberation Sans', sans-serif;letter-spacing:0.000px;">M</div><div class="t" style="left:153.00px;top:338.89px;font-size:27.3px;color:#3a3a3a;font-weight:400;font-family:'Liberation Sans', sans-serif;letter-spacing:-0.560px;-webkit-text-stroke:0.3px currentColor;">Assets</div><div class="t" style="left:153.00px;top:382.89px;font-size:27.3px;color:#3a3a3a;font-weight:400;font-family:'Liberation Sans', sans-serif;letter-spacing:-0.286px;-webkit-text-stroke:0.3px currentColor;">Preview Content</div><div class="t" style="left:125.40px;top:1847.95px;font-size:22.5px;color:#a9a9a9;font-weight:400;font-family:'Liberation Sans', sans-serif;letter-spacing:0.000px;-webkit-text-stroke:0.3px currentColor;">Filter</div><div class="t" style="left:720.80px;top:94.84px;font-size:22.4px;color:#262626;font-weight:400;font-family:'Liberation Sans', sans-serif;letter-spacing:0.193px;-webkit-text-stroke:0.3px currentColor;">GuessingGameApp</div><div class="t" style="left:1042.50px;top:94.84px;font-size:22.4px;color:#3478f6;font-weight:400;font-family:'Liberation Sans', sans-serif;letter-spacing:-0.157px;-webkit-text-stroke:0.3px currentColor;">GameView</div><div class="t" style="left:1275.60px;top:94.33px;font-size:23px;color:#262626;font-weight:400;font-family:'Liberation Sans', sans-serif;letter-spacing:0.317px;font-style:italic;-webkit-text-stroke:0.3px currentColor;">SwiftUI</div><div class="t" style="left:540.70px;top:150.64px;font-size:22.4px;color:#262626;font-weight:400;font-family:'Liberation Sans', sans-serif;letter-spacing:0.027px;-webkit-text-stroke:0.3px currentColor;">GuessingGame</div><div class="t" style="left:773.00px;top:150.64px;font-size:22.4px;color:#262626;font-weight:400;font-family:'Liberation Sans', sans-serif;letter-spacing:0.000px;-webkit-text-stroke:0.3px currentColor;">GuessingGame</div><div class="t" style="left:1005.00px;top:150.64px;font-size:22.4px;color:#262626;font-weight:400;font-family:'Liberation Sans', sans-serif;letter-spacing:-0.186px;-webkit-text-stroke:0.3px currentColor;">GameView</div><div class="t" style="left:1156.00px;top:149.82px;font-size:21px;color:#fff;font-weight:700;font-family:'Liberation Sans', sans-serif;letter-spacing:0.000px;">M</div><div class="t" style="left:1189.00px;top:150.64px;font-size:22.4px;color:#262626;font-weight:400;font-family:'Liberation Sans', sans-serif;letter-spacing:0.364px;-webkit-text-stroke:0.3px currentColor;">checkGuess()</div><div class="t" style="left:2396.70px;top:230.04px;font-size:22.4px;color:#3478f6;font-weight:400;font-family:'Liberation Sans', sans-serif;letter-spacing:-0.071px;-webkit-text-stroke:0.3px currentColor;">GameView</div><div class="t" style="left:2542.90px;top:1034.95px;font-size:22.5px;color:#86868b;font-weight:700;font-family:'Liberation Sans', sans-serif;letter-spacing:-0.350px;">Preview Crashed</div><div class="t" style="left:1094.00px;top:1849.54px;font-size:22.4px;color:#262626;font-weight:400;font-family:'Liberation Sans', sans-serif;letter-spacing:0.064px;-webkit-text-stroke:0.3px currentColor;">GuessingGame</div><div class="t" style="left:2761.30px;top:1851.04px;font-size:22.4px;color:#7f7f7f;font-weight:400;font-family:'Liberation Sans', sans-serif;letter-spacing:0.656px;-webkit-text-stroke:0.3px currentColor;">Line: 91  Col: 46</div></div></body></html>
